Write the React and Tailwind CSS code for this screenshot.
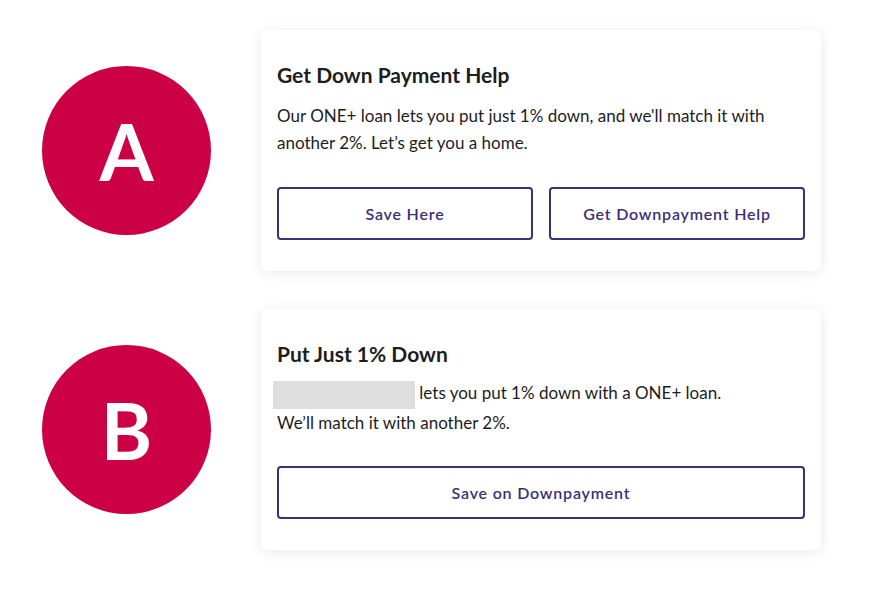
const FONT = { fontFamily: "Lato, 'Noto Sans', sans-serif" };

function Badge({ letter }) {
  return (
    <div className="flex h-[169px] w-[169px] shrink-0 items-center justify-center rounded-full bg-[#cc0044]">
      <span className="text-[78px] font-bold leading-none text-white">{letter}</span>
    </div>
  );
}

function OutlineButton({ children }) {
  return (
    <button className="flex h-[53px] flex-1 items-center justify-center rounded-[4px] border-2 border-[#3b2f78] bg-white text-[16px] font-semibold tracking-[0.8px] text-[#3b2f78]">
      {children}
    </button>
  );
}

function Card({ title, children, buttons, bodyGap = "mt-[14px]" }) {
  return (
    <div className="flex h-[241px] w-[560px] flex-col rounded-[7px] bg-white px-4 pt-[32px] shadow-[0_2px_14px_rgba(0,0,0,0.09)]">
      <h2 className="text-[21px] font-bold leading-[26px] text-[#1d1d1d]">{title}</h2>
      <div className={`${bodyGap} text-[17px] leading-[27px] text-[#1d1d1d]`}>{children}</div>
      <div className="mt-auto mb-[31px] flex gap-4">
        {buttons.map((b) => (
          <OutlineButton key={b}>{b}</OutlineButton>
        ))}
      </div>
    </div>
  );
}

export default function App() {
  return (
    <div className="flex h-[594px] w-[870px] flex-col gap-[38px] bg-white pt-[30px] pl-[42px]" style={FONT}>
      <div className="flex items-center gap-[50px]">
        <Badge letter="A" />
        <Card title="Get Down Payment Help" buttons={["Save Here", "Get Downpayment Help"]}>
          <p>
            Our ONE+ loan lets you put just 1% down, and we'll match it with
            <br />
            another 2%. Let’s get you a home.
          </p>
        </Card>
      </div>
      <div className="flex items-center gap-[50px]">
        <Badge letter="B" />
        <Card title="Put Just 1% Down" buttons={["Save on Downpayment"]} bodyGap="mt-[12px]">
          <p className="-ml-1">
            <span className="inline-block h-[28px] w-[142px] bg-[#dedede] align-middle" /> lets you put 1% down with a ONE+ loan.
          </p>
          <p>We’ll match it with another 2%.</p>
        </Card>
      </div>
    </div>
  );
}
